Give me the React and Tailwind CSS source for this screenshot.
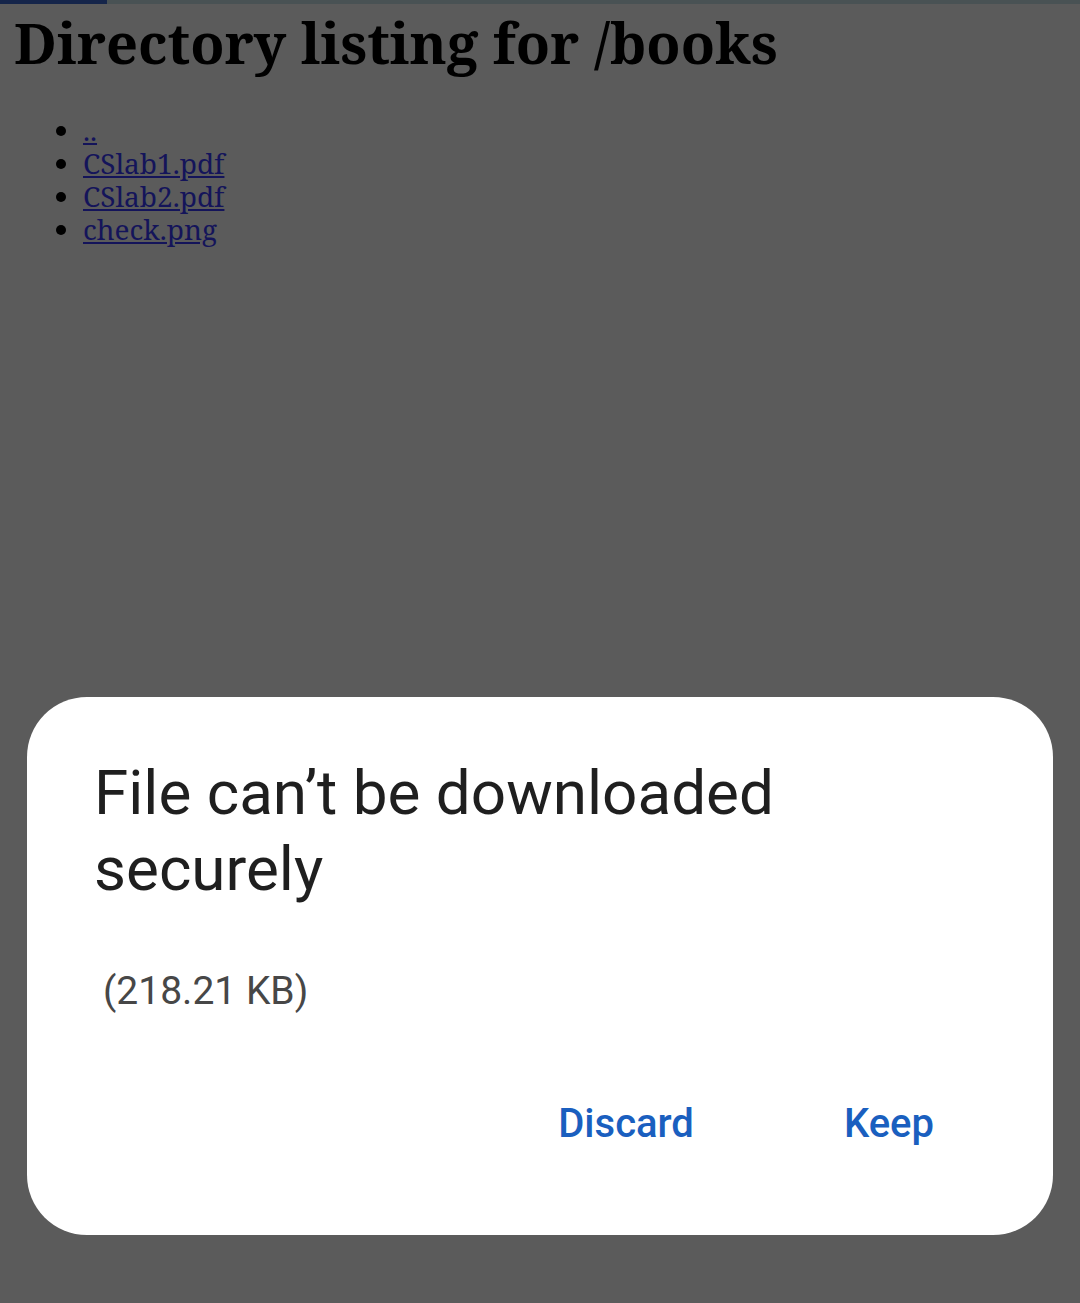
export default function App() {
  return (
    <div className="relative w-[1080px] h-[1303px] overflow-hidden bg-[#5b5b5b]">
      {/* top loading strip */}
      <div className="h-[4px] bg-[#495254] flex">
        <div className="w-[107px] h-full bg-[#15254a]" />
      </div>

      {/* dimmed page */}
      <div className="px-[14px] font-['Noto_Serif','DejaVu_Serif',serif]">
        <h1 className="text-[56px] leading-[80px] font-bold text-black -mt-[2px]">
          Directory listing for /books
        </h1>
        <ul className="mt-[32px] pl-[69px] list-disc text-[28px] leading-[33px] text-black">
          {["..", "CSlab1.pdf", "CSlab2.pdf", "check.png"].map((f) => (
            <li key={f}>
              <a href="#" className="underline text-[#14145a]">{f}</a>
            </li>
          ))}
        </ul>
      </div>

      {/* dialog */}
      <div className="absolute left-[27px] top-[697px] w-[1026px] h-[538px] bg-white rounded-[60px] font-['Roboto',sans-serif]">
        <div className="pl-[67px] pt-[58px] pr-[60px]">
          <h2 className="text-[62px] leading-[76px] text-[#1f1f1f] max-w-[730px]">
            File can’t be downloaded securely
          </h2>
          <p className="mt-[59px] pl-[9px] text-[39px] leading-[50px] text-[#474747]">(218.21 KB)</p>
        </div>
        <div className="flex justify-end gap-[150px] pr-[119px] mt-[78px]">
          <button className="text-[40px] font-medium text-[#1a5fbf]">Discard</button>
          <button className="text-[40px] font-medium text-[#1a5fbf]">Keep</button>
        </div>
      </div>
    </div>
  );
}
